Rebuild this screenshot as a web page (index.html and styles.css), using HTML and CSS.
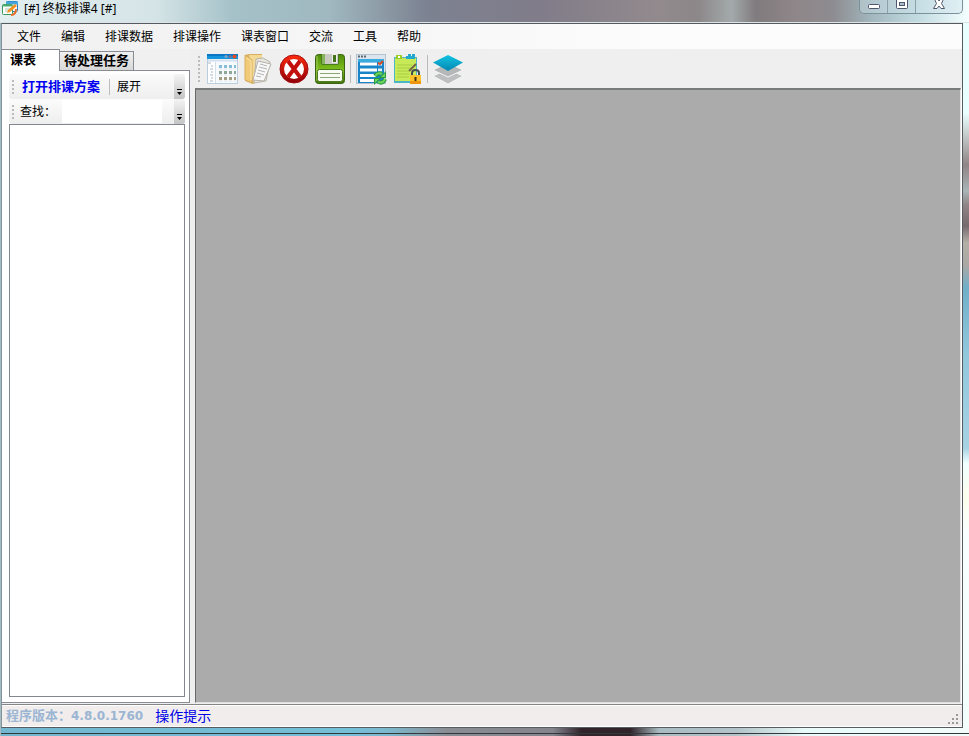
FILE: index.html
```
<!DOCTYPE html>
<html lang="zh-CN">
<head>
    <meta charset="UTF-8">
    <meta name="viewport" content="width=device-width, initial-scale=1.0">
    <title>终极排课4</title>
    <link rel="stylesheet" href="styles.css">
</head>
<body>
    <header class="titlebar">
        <svg class="app-icon" viewBox="0 0 16 16">
            <rect x="4.500" y="1.500" width="11" height="10" rx="1" fill="#fff" stroke="#287ec0"/>
            <path d="M4 3h12" stroke="#43a5dc" stroke-width="3"/>
            <rect x=".5" y="4.500" width="10" height="10" rx="1" fill="#fff" stroke="#3b9861"/>
            <path d="M1 5.500h9" stroke="#4bb06d" stroke-width="2"/>
            <path d="M3 9h5M3 11h3" stroke="#a9c9b5"/>
            <path d="M5 13l1-3 7-6 2 2-7 6z" fill="#f59122"/>
            <path d="M9 15q5 0 5-6" fill="none" stroke="#e56c25" stroke-width="2"/>
        </svg>
        <span class="title">[#] 终极排课4 [#]</span>
        <div class="window-buttons">
            <button type="button" class="win-btn" aria-label="最小化">
                <svg width="14" height="12" viewBox="0 0 14 12"><rect x="1.500" y="4.500" width="11" height="4" rx="1" fill="#fff" stroke="#50576c"/></svg>
            </button>
            <button type="button" class="win-btn" aria-label="最大化">
                <svg width="14" height="12" viewBox="0 0 14 12"><rect x="1.500" y="-1.500" width="11" height="10" rx="1" fill="#fff" stroke="#50576c"/><rect x="4.500" y="2.500" width="5" height="3" fill="#a9bec9" stroke="#50576c"/></svg>
            </button>
            <button type="button" class="win-btn close" aria-label="关闭">
                <svg width="14" height="12" viewBox="0 0 14 12"><path d="M2 -2h3l2 3 2-3h3L9.500 3.500 12.500 8.500H9L7 6 5 8.500H1.500l3-5z" fill="#fff" stroke="#50576c"/></svg>
            </button>
        </div>
    </header>

    <div class="frame">
        <div class="client">
            <nav class="menubar">
                <button type="button">文件</button>
                <button type="button">编辑</button>
                <button type="button">排课数据</button>
                <button type="button">排课操作</button>
                <button type="button">课表窗口</button>
                <button type="button">交流</button>
                <button type="button">工具</button>
                <button type="button">帮助</button>
            </nav>

            <div class="workspace">
                <aside class="sidebar">
                    <div class="tabs">
                        <button type="button" class="tab active">课表</button>
                        <button type="button" class="tab">待处理任务</button>
                    </div>
                    <div class="tab-page">
                        <div class="strip">
                            <i class="grip"></i>
                            <button type="button" class="open-plan">打开排课方案</button>
                            <i class="strip-sep"></i>
                            <button type="button" class="expand">展开</button>
                            <button type="button" class="overflow" aria-label="更多">
                                <svg width="7" height="6" viewBox="0 0 7 6"><path d="M1 0h5v1H1zM1 3h5L3.500 6z" fill="#000"/></svg>
                            </button>
                        </div>
                        <div class="strip search">
                            <i class="grip"></i>
                            <label for="find">查找：</label>
                            <input type="text" id="find">
                            <button type="button" class="overflow" aria-label="更多">
                                <svg width="7" height="6" viewBox="0 0 7 6"><path d="M1 0h5v1H1zM1 3h5L3.500 6z" fill="#000"/></svg>
                            </button>
                        </div>
                        <div class="tree"></div>
                    </div>
                </aside>

                <main class="main">
                    <div class="toolbar">
                        <i class="grip"></i>
                        <button type="button" class="tool" aria-label="课表总览">
                            <svg viewBox="0 0 32 32">
                                <rect x="1.500" y="1.500" width="30" height="29" fill="#f7fafc" stroke="#b9cedf"/>
                                <path d="M1 1h31v5H1z" fill="#1594dc"/>
                                <path d="M1 1h31v2H1z" fill="#0878c6"/>
                                <circle cx="20" cy="3.500" r="1.500" fill="#7fa5c6"/><circle cx="24" cy="3.500" r="1.500" fill="#7c6d8d"/><circle cx="28.500" cy="3.500" r="2" fill="#e44a20"/>
                                <path d="M2 7.500h29" stroke="#d3e1ec" stroke-width="2"/>
                                <path d="M2 9h7v21H2z" fill="#fff"/>
                                <path d="M9.500 9v21" stroke="#d3dfe8"/>
                                <path d="M2 10h3M5 13h2M4 16h3M5 19h2M4 22h3M5 25h2M4 28h3" stroke="#a9b8c4"/>
                                <g stroke-width="3" stroke-dasharray="3 2"><path d="M13 13.500h17" stroke="#86bdd9"/><path d="M13 19.500h17" stroke="#8fa79a"/><path d="M13 25.500h17" stroke="#a39f85"/></g>
                                <path d="M13 16h17M13 22h17M13 28h17" stroke="#e1e6ea" stroke-dasharray="3 2"/>
                            </svg>
                        </button>
                        <button type="button" class="tool" aria-label="打开">
                            <svg viewBox="0 0 32 32">
                                <path d="M3 2l4-1h13v26l-9 4-8-3z" fill="#d9af61"/>
                                <path d="M7 2h13v24l-9 3z" fill="#f4d995"/>
                                <path d="M14 6l7-1 7 4-4 19-12 2z" fill="#e7e5df" stroke="#bbb5aa"/>
                                <path d="M16 8l13 3-7 17-11-1z" fill="#f8f8f8" stroke="#b5b2ac"/>
                                <path d="M18 11l7 2M17 14l8 2M16 17l7 2M15 20l7 2M14 23l5 1" stroke="#b3b3b3"/>
                                <path d="M3 2l7 5v23l-7-3z" fill="#f1ca78" stroke="#d5ad60"/>
                                <path d="M5 5l4 3v19" fill="none" stroke="#ffe9b0"/>
                            </svg>
                        </button>
                        <button type="button" class="tool" aria-label="关闭方案">
                            <svg viewBox="0 0 32 32">
                                <defs><linearGradient id="red" x2="0" y2="1"><stop stop-color="#ff2c0b"/><stop offset="1" stop-color="#8d0009"/></linearGradient></defs>
                                <circle cx="16" cy="16" r="14" fill="url(#red)" stroke="#a50c12"/>
                                <circle cx="16" cy="16" r="10" fill="#fff"/>
                                <path d="M10 8l12 16M22 8L10 24" stroke="#c4100c" stroke-width="4"/>
                            </svg>
                        </button>
                        <button type="button" class="tool" aria-label="保存">
                            <svg viewBox="0 0 32 32">
                                <defs><linearGradient id="green" x2="0" y2="1"><stop stop-color="#4e8b09"/><stop offset=".5" stop-color="#7bbd1d"/><stop offset="1" stop-color="#427309"/></linearGradient></defs>
                                <rect x="1.500" y="1.500" width="29" height="29" rx="3" fill="url(#green)" stroke="#386312"/>
                                <path d="M3 3v25" stroke="#a3cd54"/>
                                <path d="M7 1h18v9q0 2-2 2H9q-2 0-2-2z" fill="#4a7b1e"/>
                                <path d="M11 1h13v10H11z" fill="#c8c9c3"/><path d="M8 1h3v10H8z" fill="#88b35e"/>
                                <rect x="18.500" y="1.500" width="4" height="8" fill="#437317" stroke="#eee"/>
                                <rect x="3.500" y="16.500" width="25" height="12" rx="2" fill="#f7fbf1" stroke="#4b791e"/>
                                <path d="M6 20.500h20M6 24.500h20" stroke="#8ba578"/>
                            </svg>
                        </button>
                        <i class="tool-sep"></i>
                        <button type="button" class="tool" aria-label="刷新列表">
                            <svg viewBox="0 0 32 32">
                                <rect x="1.500" y="1.500" width="29" height="29" fill="#dce5ed" stroke="#b5c3ce"/>
                                <path d="M3 3.500h8" stroke="#5d6873" stroke-width="2" stroke-dasharray="2 1"/>
                                <path d="M3 6h26v24H3z" fill="#1984c8"/><path d="M3 6h26v3H3z" fill="#39acdf"/>
                                <path d="M5 11h17M5 17h17M5 22.500h17M5 27.500h14" stroke="#fff" stroke-width="3"/>
                                <path d="M23 11h4M23 17h4" stroke="#e3f0f8" stroke-width="3"/>
                                <path d="M23 10l2 1 3-3" fill="none" stroke="#d74922" stroke-width="2"/>
                                <path d="M20 23q3-4 7-2M30 26q-2 5-7 3" fill="none" stroke="#289b40" stroke-width="4"/>
                                <path d="M31 18v7h-7zM19 32v-7h7z" fill="#289b40"/>
                                <path d="M20 23q3-4 7-2M30 26q-2 5-7 3" fill="none" stroke="#6fd45b" stroke-width="2"/>
                                <path d="M30 20v4h-4zM20 30v-4h4z" fill="#6fd45b"/>
                            </svg>
                        </button>
                        <button type="button" class="tool" aria-label="锁定">
                            <svg viewBox="0 0 32 32">
                                <path d="M3 4h23v24l-2 2H3z" fill="#4db6c6"/>
                                <path d="M4 5h21v23H4z" fill="#c8ea59"/>
                                <path d="M15 3h2V1h3v2h1V1h3v5h-9z" fill="#23a7ca"/>
                                <path d="M5 2h6v4H5z" fill="#9bce24"/><path d="M7 3h2v2H7z" fill="#fff"/>
                                <path d="M6 12h15M6 15h14M6 18h12M6 21h12M6 24h12" stroke="#a5cf45"/>
                                <path d="M18 18l7-7" stroke="#756347" stroke-width="2"/>
                                <path d="M21 22v-2q0-3 3.500-3t3.500 3v2" fill="none" stroke="#454b50" stroke-width="2"/>
                                <path d="M19 22h11v9H19z" fill="#ffc12b"/><path d="M19 28h11v3H19z" fill="#ef970b"/>
                                <path d="M24.500 24v4" stroke="#443015" stroke-width="2"/>
                            </svg>
                        </button>
                        <i class="tool-sep"></i>
                        <button type="button" class="tool" aria-label="图层">
                            <svg viewBox="0 0 32 32">
                                <defs><linearGradient id="blue" x2="0" y2="1"><stop stop-color="#10c4e2"/><stop offset="1" stop-color="#0686b2"/></linearGradient></defs>
                                <path d="M1 23l15-7 15 7-15 8z" fill="#bdbfbf" stroke="#f4f4f4"/>
                                <path d="M1 17l15-7 15 7-15 7z" fill="#b4b8b8" stroke="#f4f4f4"/>
                                <path d="M1 9.500L16 2l15 7.500L16 18z" fill="url(#blue)"/>
                            </svg>
                        </button>
                    </div>
                    <div class="mdi"></div>
                </main>
            </div>

            <footer class="statusbar">
                <span class="version">程序版本：<span class="number">4.8.0.1760</span></span>
                <span class="hint">操作提示</span>
                <svg class="sizegrip" width="11" height="11" viewBox="0 0 11 11"><path d="M8 0h2v2H8zM4 4h2v2H4zM8 4h2v2H8zM0 8h2v2H0zM4 8h2v2H4zM8 8h2v2H8z" fill="#999"/></svg>
            </footer>
        </div>
    </div>
</body>
</html>
```
FILE: styles.css
```
* {
    box-sizing: border-box;
}

body {
    margin: 0;
    height: 100vh;
    display: flex;
    flex-direction: column;
    overflow: hidden;
    font-family: "Liberation Sans", "Noto Sans CJK SC", sans-serif;
    font-size: 12px;
    line-height: 16px;
    color: #000;
    background: #edf9fb;
}

button {
    margin: 0;
    padding: 0;
    border: none;
    background: none;
    font: inherit;
    color: inherit;
}

svg {
    display: block;
}

/* title bar */
.titlebar {
    height: 23px;
    display: flex;
    align-items: flex-start;
    padding: 0 6px 0 2px;
    border-bottom: 1px solid #dce4e6;
    background: linear-gradient(90deg, #e2eef0 0, #d5e4e7 16%, #a5c2c8 24%, #a0b8c0 34%, #7c8291 44%, #817c89 56%, #928a8d 68%, #8c8789 72%, #a3aaab 75.5%, #807b7e 78%, #8f8689 82%, #8d8c90 86%, #a3b8bf 90%, #c4dde3 95%, #f4ffff 100%);
}

.app-icon {
    width: 16px;
    height: 16px;
}

.title {
    margin-left: 6px;
    font-family: "Noto Sans", "Noto Sans CJK SC", sans-serif;
    line-height: 18px;
}

.window-buttons {
    margin-left: auto;
    display: flex;
    height: 14px;
    border: 1px solid #7c929b;
    border-top: none;
    border-radius: 0 0 5px 5px;
    background: rgba(205, 225, 232, 0.4);
}

.win-btn {
    width: 28px;
    display: flex;
    justify-content: center;
    border-right: 1px solid #8ba0a9;
}

.win-btn svg {
    height: 12px;
}

.win-btn.close {
    width: 46px;
    border-right: none;
}

/* window frame */
.frame {
    flex: 1;
    min-height: 0;
    display: flex;
    padding: 0 6px 8px 0;
    border-left: 1px solid #a4bbc2;
    background:
        linear-gradient(#34383b, #34383b) bottom 2px left 0 / 100% 1px no-repeat,
        linear-gradient(90deg, #72b7cf 0, #75bfd9 36%, #7cb9ce 40%, #8b8d95 46%, #84858f 57%, #30232a 60%, #30232a 65%, #a9bcc2 68%, #b2c4c9 76%, #e9fafa 83%, #f1fcfa 100%) bottom / 100% 8px no-repeat,
        linear-gradient(#eaffff 0, #eaffff 90px, #bfc4c3 115px, #8f8486 142px, #a9b4b5 168px, #8f8486 182px, #776a6e 203px, #b3afa7 220px, #aaa8a4 242px, #70afc9 265px, #91c7dc 330px, #a6d2e3 425px, #efffff 440px, #fdffed 475px, #f9ffff 510px, #f2fffb 100%);
}

.client {
    flex: 1;
    min-width: 0;
    display: flex;
    flex-direction: column;
    border: 1px solid #555b60;
    border-left-color: #82939b;
    background: #efefef;
}

.menubar {
    height: 25px;
    display: flex;
    padding-left: 5px;
    background: linear-gradient(90deg, #f0f0f0, #fcfcfc 70%);
}

.menubar button {
    padding: 0 10px;
}

.workspace {
    flex: 1;
    min-height: 0;
    display: flex;
    gap: 5px;
}

/* left panel */
.sidebar {
    width: 188px;
    display: flex;
    flex-direction: column;
    margin-bottom: 1px;
}

.tabs {
    height: 21px;
    display: flex;
    align-items: flex-end;
    font-size: 13px;
    font-weight: bold;
    background: #f0f0f0;
}

.tab {
    height: 19px;
    padding: 0 4px;
    border: 1px solid #898c95;
    border-left: none;
    border-bottom: none;
    background: linear-gradient(#f1f1f1, #d8d8d8);
}

.tab.active {
    width: 58px;
    height: 21px;
    padding-left: 8px;
    text-align: left;
    background: #fff;
}

.tab-page {
    flex: 1;
    display: flex;
    flex-direction: column;
    padding: 4px 4px 5px 7px;
    border-right: 1px solid #898c95;
    border-bottom: 1px solid #898c95;
    background:
        linear-gradient(#898c95, #898c95) top right / 130px 1px no-repeat,
        #fff;
}

.strip {
    height: 25px;
    display: flex;
    align-items: center;
    border-radius: 3px;
    background: linear-gradient(#fbfbfb, #eee);
}

.grip {
    width: 2px;
    height: 14px;
    margin-left: 3px;
    background: repeating-linear-gradient(#bbb 0 2px, transparent 2px 4px);
}

.open-plan {
    margin-left: 8px;
    font-size: 13px;
    font-weight: bold;
    color: #0000f0;
}

.strip-sep {
    width: 1px;
    height: 16px;
    margin: 0 7px 0 9px;
    background: #bdbdbd;
}

.overflow {
    align-self: stretch;
    width: 11px;
    margin-left: auto;
    display: flex;
    align-items: flex-end;
    justify-content: center;
    padding-bottom: 4px;
    border-radius: 0 3px 3px 0;
    background: linear-gradient(#f4f4f4, #c4c4c4);
}

.search label {
    width: 42px;
    margin-left: 6px;
}

.search input {
    width: 100px;
    height: 23px;
    padding: 0 2px;
    border: none;
    background: #fff;
    font: inherit;
    outline: none;
}

.tree {
    flex: 1;
    border: 1px solid #828790;
    background: #fff;
}

/* right panel */
.main {
    flex: 1;
    min-width: 0;
    display: flex;
    flex-direction: column;
}

.toolbar {
    height: 39px;
    display: flex;
    align-items: center;
    gap: 4px;
    background: #efefef;
}

.toolbar .grip {
    height: 26px;
    margin-right: 2px;
}

.tool svg {
    width: 32px;
    height: 32px;
}

.tool-sep {
    width: 1px;
    height: 28px;
    background: #bbb;
}

.mdi {
    flex: 1;
    border: 1px solid #696969;
    border-top: 2px solid #787b7b;
    border-right: 1px solid #e5e5e5;
    border-bottom: 1px solid #dedede;
    box-shadow: 1px 0 #fff;
    margin-right: 1px;
    margin-bottom: 1px;
    background: #ababab;
}

.statusbar {
    height: 23px;
    display: flex;
    align-items: center;
    padding: 0 3px 0 4px;
    border-top: 1px solid #858585;
    box-shadow: inset 0 1px #fff, inset 0 -1px #fff;
    background: #f0edec;
}

.version {
    font-size: 13px;
    font-weight: bold;
    color: #9bb5d3;
}

.number {
    font-family: "DejaVu Sans", sans-serif;
    font-size: 12px;
}

.hint {
    margin-left: 12px;
    font-size: 14px;
    color: #0000e6;
}

.sizegrip {
    margin-left: auto;
    align-self: flex-end;
    margin-bottom: 2px;
}
```
